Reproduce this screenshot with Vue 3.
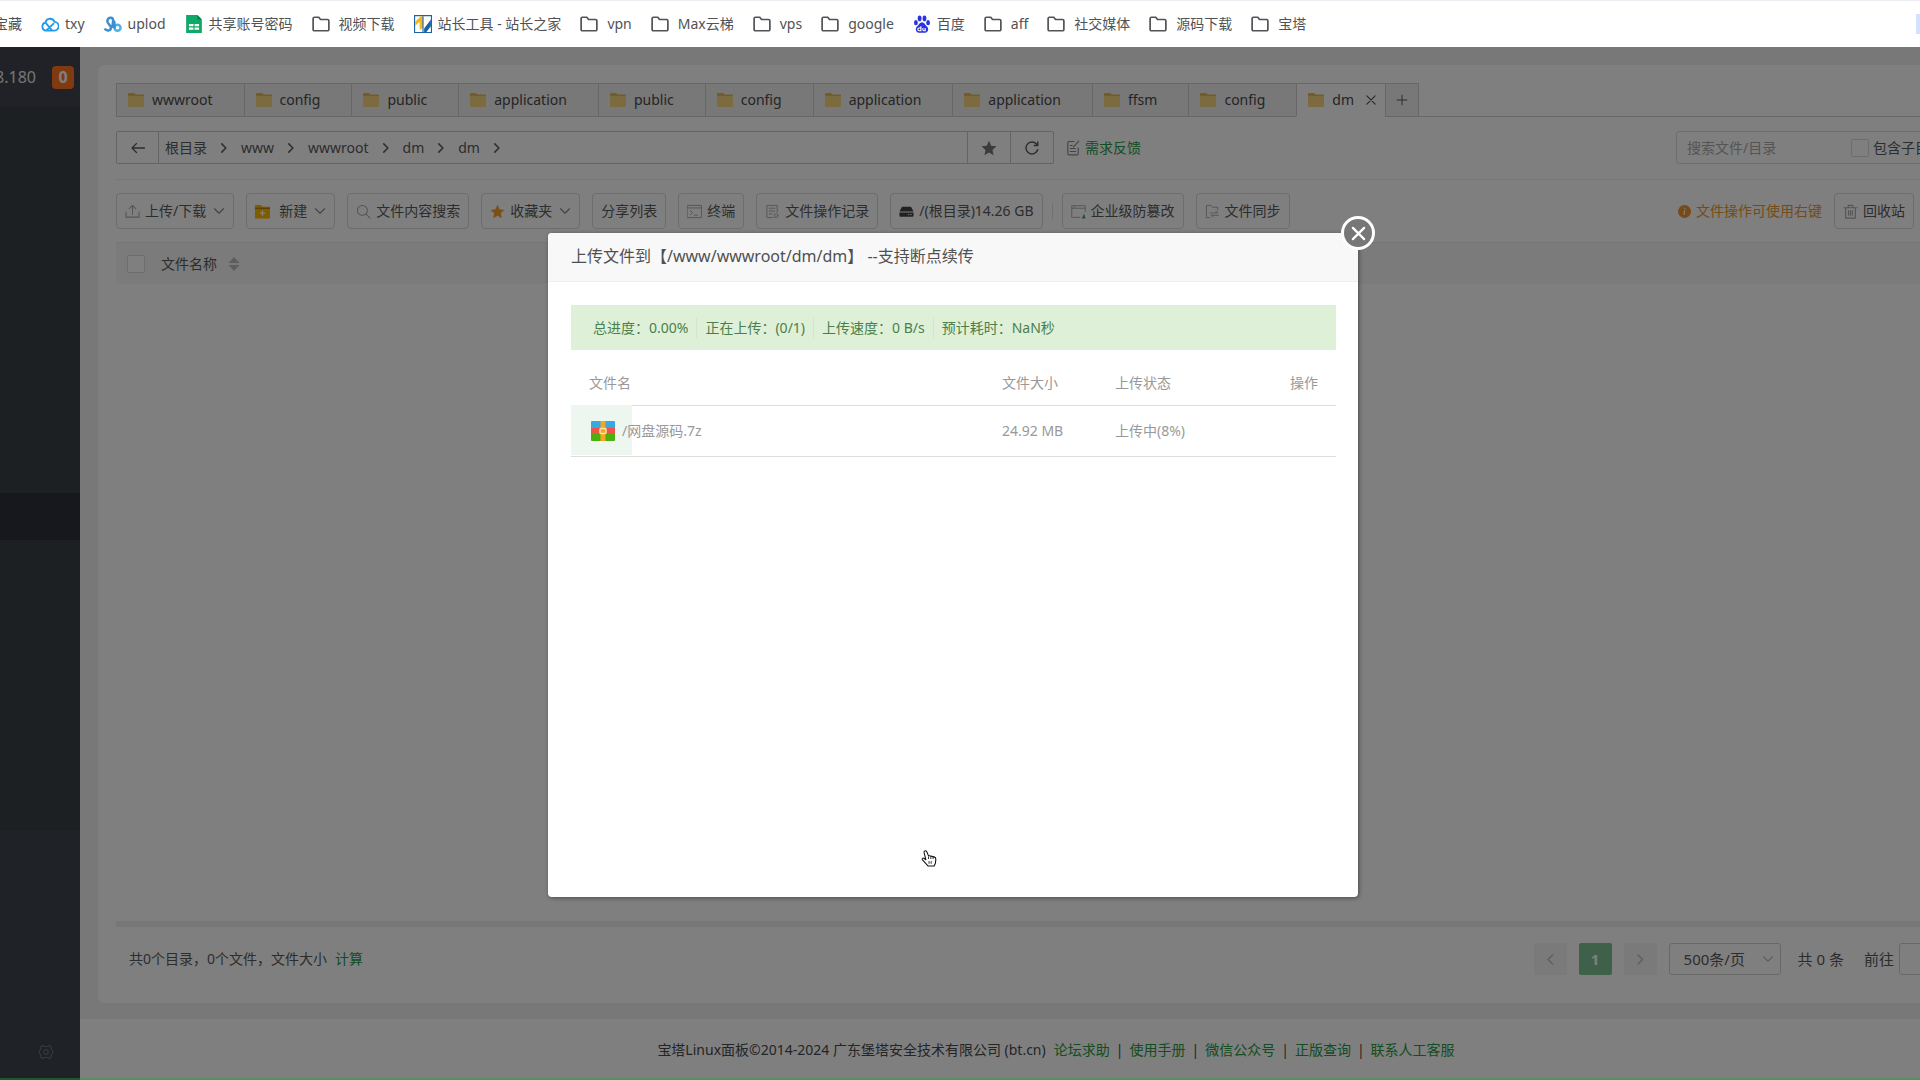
<script setup>
import { ref } from 'vue'

const S = 'fill="none" stroke="currentColor" stroke-linecap="round" stroke-linejoin="round"'
const icons = {
  folderLine: `<path ${S} stroke-width="1.5" d="M1 3.2q0-1.2 1.2-1.2H6l1.6 2h6.2q1.2 0 1.2 1.2v7.6q0 1.2-1.2 1.2H2.2Q1 14 1 12.800z"/>`,
  cloud: `<path fill="none" stroke="#1f9bea" stroke-width="1.600" stroke-linejoin="round" d="M4.600 13.800a3.600 3.600 0 0 1-.6-7.100 4.200 4.200 0 0 1 8.100-.5 3.800 3.800 0 0 1-.4 7.600zM4.800 13.600l6.800-6.400M4.200 7l5.600 6.600"/>`,
  uplod: `<path fill="none" stroke="#3a8fd0" stroke-width="2.200" stroke-linecap="round" d="M1.200 12.800c2 1.700 5 1 5-1.500S2.500 8 3 5s4.500-3.500 5-1-1 4.500 0 6.500"/><circle cx="12" cy="11.300" r="2.700" fill="none" stroke="#49b4e8" stroke-width="2.200"/><path stroke="#3a8fd0" stroke-width="2.200" stroke-linecap="round" d="M9.200 6v5"/>`,
  sheet: `<path fill="#0fa968" d="M1 0h10l4 4v12H1z"/><path fill="#087d4c" d="M11 0l4 4h-4z"/><path fill="#fff" d="M3.500 8h4v2h-4zM8.500 8h4v2h-4zM3.500 11h4v2h-4zM8.500 11h4v2h-4z"/>`,
  zhan: `<path fill="#fff" stroke="#1763a6" stroke-width="1" d="M.5.5h15v15H.5z"/><path fill="#f3b81c" d="M1 6l5-5h1.800v10.500L5 13V6L1 9.500z"/><path fill="#1763a6" d="M7.500 1h1v14h-1zM9 12l6-8v6l-4 5H9z"/>`,
  paw: `<g fill="#2932e1"><ellipse cx="2.600" cy="6.800" rx="1.700" ry="2.300"/><ellipse cx="5.900" cy="3" rx="1.700" ry="2.500"/><ellipse cx="10.200" cy="3" rx="1.700" ry="2.500"/><ellipse cx="13.400" cy="6.800" rx="1.700" ry="2.300"/><path d="M8 6.500c2 0 2.500 2 4.200 3.600 2.500 2.400 1 5.600-1.400 5.600H5.200c-2.400 0-3.900-3.200-1.400-5.600C5.500 8.500 6 6.500 8 6.500z"/></g><path fill="none" stroke="#fff" d="M7 10v4H5.500a1.200 1.200 0 0 1 0-2.500H7M8.800 11.500V13q0 1 1 1h1v-2.500"/>`,
  folder: `<path fill="#e6b84a" d="M0 2q0-1 1-1h5l1.500 1.500H15q1 0 1 1V6H0z"/><path fill="#f7d67c" d="M0 4h16v10q0 1-1 1H1q-1 0-1-1z"/>`,
  back: `<path ${S} stroke-width="1.300" d="M2 8h12.500M6.500 3.500L2 8l4.500 4.500"/>`,
  right: `<path ${S} stroke-width="2" d="M5 2.500L10.500 8 5 13.500"/>`,
  left: `<path ${S} stroke-width="2" d="M10.500 2.500L5 8l5.500 5.500"/>`,
  down: `<path ${S} stroke-width="1.500" d="M2 5l6 6 6-6"/>`,
  star: `<path fill="currentColor" d="M8 .8l2.200 4.900 5.300.6-4 3.600 1.100 5.300L8 12.500l-4.600 2.700 1.100-5.300-4-3.600 5.300-.6z"/>`,
  refresh: `<path ${S} stroke-width="1.400" d="M13.800 9.500A6 6 0 1 1 12.500 4l1.200 1.300M13.800 2v3.500h-3.500"/>`,
  note: `<path ${S} stroke-width="1.100" d="M9 1.500H4q-1.200 0-1.200 1.200v11q0 1.200 1.200 1.200h8q1.200 0 1.200-1.200V8M5.200 8.500h5M5.200 11.500h5.500M8.500 6.800L13.800 1.200M5.200 5.500h2"/>`,
  upload: `<path ${S} stroke-width="1.100" d="M1 8.500V14h14V8.500M8 11V1.800M4.500 5L8 1.500 11.500 5"/>`,
  newFolder: `<path fill="#ffb800" d="M0 1h6l2 2h8v12.500H0z"/><path stroke="#9a6a00" stroke-width="1" d="M0 4.500h16"/><path stroke="#fff" stroke-width="1.400" d="M8 7v5.500M5.200 9.800h5.600"/>`,
  search: `<circle cx="6.800" cy="6.800" r="5.300" ${S} stroke-width="1.100"/><path ${S} stroke-width="1.100" d="M10.800 10.800L15 15"/>`,
  terminal: `<path ${S} d="M.6 1.500h14.800v13H.6zM.6 4.200h14.800M3.500 7l2.500 2.200-2.500 2.200M8 12h3"/>`,
  record: `<path ${S} d="M8.500 14.500H2v-13h11V9M4.500 4.500h6M4.500 7.500h6M4.500 10.500h3"/><circle cx="11.800" cy="12.500" r="2" ${S}/>`,
  disk: `<path fill="#444" d="M3.200 3h9.600L15.500 8H.5zM.5 9h15v3.500q0 1-1 1h-13q-1 0-1-1z"/><path stroke="#fff" d="M9.500 11.300h1.500M12 11.300h1.500"/>`,
  guard: `<path ${S} d="M9.500 14.200H.8V1.800h14.400V8M.8 4.500h14.400M3 3.200h1"/><path fill="#4f9c63" d="M11.500 15.500L14 10.500l1.500 5z"/>`,
  sync: `<path ${S} d="M5 14.500H1.500v-13h4.800L8 3.500h5.500v3M5.500 9.500h8l-2-2M14.500 12H6.500l2 2.200"/>`,
  info: `<circle cx="8" cy="8" r="8" fill="#f0942a"/><path stroke="#fff" stroke-width="1.600" d="M8.600 3.500l-.3 1.600M8.200 6.500l-.8 5.500"/>`,
  trash: `<path ${S} stroke-width="1.200" d="M1 4h14M5.500 4V1.500h5V4M2.800 4v11h10.400V4M6 7v5M8 7v5M10 7v5"/>`,
  close: `<path ${S} stroke-width="1.400" d="M2.500 2.500l11 11M13.500 2.500l-11 11"/>`,
  closeBold: `<path ${S} stroke-width="2.400" d="M2 2l12 12M14 2L2 14"/>`,
  plus: `<path ${S} stroke-width="1.200" d="M8 1.500v13M1.500 8h13"/>`,
  sort: `<path fill="currentColor" d="M8 1l5.500 6h-11zM8 15l5.500-6h-11z"/>`,
  gear: `<path ${S} stroke-width="1.200" d="M4.500 1.500L6.500 2.500h3l2-1 1.500 1 .3 2.500L15.200 8l-1.900 3-.3 2.500-1.500 1-2-1h-3l-2 1-1.500-1L2.700 11 .8 8l1.900-3L3 2.500z"/><circle cx="8" cy="8" r="2.300" ${S} stroke-width="1.200"/>`,
  zip: `<path fill="#35a9e0" d="M1 0h22q1 0 1 1v6H0V1q0-1 1-1z"/><path fill="#f0524a" d="M0 7h24v6H0z"/><path fill="#4caf0c" d="M0 13h24v6q0 1-1 1H1q-1 0-1-1z"/><path fill="#f5a623" d="M9.500 0h5v20h-5z"/><rect x="9" y="7.500" width="6" height="5" rx="1" fill="#f5a623" stroke="#fde3a7" stroke-width="1.500"/>`,
  hand: `<path fill="#fff" stroke="#111" stroke-width="1" stroke-linejoin="round" d="M4.500 1.500c.9-.5 1.700 0 2 .9l1.400 3.400 5.300 1.200c1.300.3 1.800 1 1.700 2.300l-.4 3.700-1.200 2.500H7.500L2.300 9.800c-.8-1.200.6-2.200 1.700-1.300l1.500 1.200L3.800 2.800c-.1-.6.1-1 .7-1.300z"/><path stroke="#111" stroke-width=".8" d="M8 6.500v2.500M10.200 6.500V9M12.300 7v2M8.500 11v2.500M10.500 11v2.500"/>`,
}

const bookmarks = [
  { icon: 'cloud', text: 'txy' },
  { icon: 'uplod', text: 'uplod' },
  { icon: 'sheet', text: '共享账号密码' },
  { icon: 'folderLine', text: '视频下载' },
  { icon: 'zhan', text: '站长工具 - 站长之家' },
  { icon: 'folderLine', text: 'vpn' },
  { icon: 'folderLine', text: 'Max云梯' },
  { icon: 'folderLine', text: 'vps' },
  { icon: 'folderLine', text: 'google' },
  { icon: 'paw', text: '百度' },
  { icon: 'folderLine', text: 'aff' },
  { icon: 'folderLine', text: '社交媒体' },
  { icon: 'folderLine', text: '源码下载' },
  { icon: 'folderLine', text: '宝塔' },
]
const tabs = ['wwwroot', 'config', 'public', 'application', 'public', 'config', 'application', 'application', 'ffsm', 'config']
const crumbs = ['根目录', 'www', 'wwwroot', 'dm', 'dm']
const tools = [
  { icon: 'upload', text: '上传/下载', menu: true },
  { icon: 'newFolder', text: '新建', menu: true, wide: true },
  { icon: 'search', text: '文件内容搜索' },
  { icon: 'star', text: '收藏夹', menu: true, gold: true },
  { text: '分享列表' },
  { icon: 'terminal', text: '终端' },
  { icon: 'record', text: '文件操作记录' },
  { icon: 'disk', text: '/(根目录)14.26 GB' },
]
const extraTools = [
  { icon: 'guard', text: '企业级防篡改' },
  { icon: 'sync', text: '文件同步' },
]
const summary = ['总进度：0.00%', '正在上传：(0/1)', '上传速度：0 B/s', '预计耗时：NaN秒']
const files = [{ name: '/网盘源码.7z', size: '24.92 MB', status: '上传中(8%)', progress: 8 }]
const links = ['论坛求助', '使用手册', '微信公众号', '正版查询', '联系人工客服']

const pageSize = ref('500条/页')
const keyword = ref('')
const withSub = ref(false)
const allChecked = ref(false)
</script>

<template>
  <div class="window">
    <nav class="bookmarks" aria-label="书签栏">
      <a href="#" class="bookmark first">宝藏</a>
      <a v-for="(b, i) in bookmarks" :key="i" href="#" class="bookmark" :class="{ dir: b.icon === 'folderLine' }">
        <svg class="icon" viewBox="0 0 16 16" v-html="icons[b.icon]"></svg>{{ b.text }}
      </a>
      <span class="bookmark-end"></span>
    </nav>

    <div class="shell">
      <aside class="sidebar">
        <div class="server"><span>8.180</span><span class="badge">0</span></div>
        <nav class="menu"><div class="menu-active"></div></nav>
        <div class="menu-rest"></div>
        <div class="settings"><svg class="icon" viewBox="0 0 16 16" v-html="icons.gear"></svg></div>
      </aside>

      <div class="main">
        <section class="card">
          <div class="tabs">
            <button v-for="(t, i) in tabs" :key="i" type="button" class="tab">
              <svg class="icon" viewBox="0 0 16 16" v-html="icons.folder"></svg>{{ t }}
            </button>
            <button type="button" class="tab current">
              <svg class="icon" viewBox="0 0 16 16" v-html="icons.folder"></svg>dm
              <svg class="icon tab-close" viewBox="0 0 16 16" v-html="icons.close"></svg>
            </button>
            <button type="button" class="tab add" aria-label="新标签">
              <svg class="icon" viewBox="0 0 16 16" v-html="icons.plus"></svg>
            </button>
            <span class="tabs-line"></span>
          </div>

          <div class="path-row">
            <div class="path">
              <button type="button" class="path-btn back" aria-label="返回"><svg class="icon" viewBox="0 0 16 16" v-html="icons.back"></svg></button>
              <div class="crumbs">
                <template v-for="(c, i) in crumbs" :key="i">
                  <a href="#">{{ c }}</a>
                  <svg class="icon chevron" viewBox="0 0 16 16" v-html="icons.right"></svg>
                </template>
              </div>
              <button type="button" class="path-btn star" aria-label="收藏"><svg class="icon" viewBox="0 0 16 16" v-html="icons.star"></svg></button>
              <button type="button" class="path-btn" aria-label="刷新"><svg class="icon" viewBox="0 0 16 16" v-html="icons.refresh"></svg></button>
            </div>
            <a href="#" class="feedback"><svg class="icon" viewBox="0 0 16 16" v-html="icons.note"></svg>需求反馈</a>
            <div class="search">
              <input v-model="keyword" type="text" placeholder="搜索文件/目录" aria-label="搜索文件/目录" />
              <input id="sub" v-model="withSub" type="checkbox" class="check" />
              <label for="sub">包含子目录</label>
            </div>
          </div>

          <div class="toolbar">
            <button v-for="t in tools" :key="t.text" type="button" class="tool">
              <svg v-if="t.icon" class="icon" :class="{ gold: t.gold, wide: t.wide }" viewBox="0 0 16 16" v-html="icons[t.icon]"></svg>
              {{ t.text }}
              <svg v-if="t.menu" class="icon caret" viewBox="0 0 16 16" v-html="icons.down"></svg>
            </button>
            <span class="tool-sep"></span>
            <button v-for="t in extraTools" :key="t.text" type="button" class="tool">
              <svg class="icon" viewBox="0 0 16 16" v-html="icons[t.icon]"></svg>
              {{ t.text }}
            </button>
            <span class="hint"><svg class="icon" viewBox="0 0 16 16" v-html="icons.info"></svg>文件操作可使用右键</span>
            <button type="button" class="tool recycle"><svg class="icon" viewBox="0 0 16 16" v-html="icons.trash"></svg>回收站</button>
          </div>

          <div class="sheet">
            <div class="sheet-head">
              <input id="all" v-model="allChecked" type="checkbox" class="check" />
              <label for="all">文件名称</label>
              <svg class="icon" viewBox="0 0 16 16" v-html="icons.sort"></svg>
            </div>
          </div>

          <div class="card-foot">
            <p>共0个目录，0个文件，文件大小<a href="#">计算</a></p>
            <div class="pager">
              <button type="button" class="page" aria-label="上一页"><svg class="icon" viewBox="0 0 16 16" v-html="icons.left"></svg></button>
              <button type="button" class="page on">1</button>
              <button type="button" class="page" aria-label="下一页"><svg class="icon" viewBox="0 0 16 16" v-html="icons.right"></svg></button>
              <span class="size">
                <select v-model="pageSize" aria-label="每页条数"><option>500条/页</option></select>
                <svg class="icon" viewBox="0 0 16 16" v-html="icons.down"></svg>
              </span>
              <span class="total">共 0 条</span>
              <label for="jump">前往</label>
              <input id="jump" type="text" class="jump" />
            </div>
          </div>
        </section>

        <footer class="footer">
          <span class="copyright">宝塔Linux面板©2014-2024 广东堡塔安全技术有限公司 (bt.cn)</span>
          <template v-for="(l, i) in links" :key="l">
            <span v-if="i" class="bar">|</span><a href="#">{{ l }}</a>
          </template>
        </footer>
      </div>

      <div class="mask">
        <div class="modal" role="dialog" aria-labelledby="upload-title">
          <h2 id="upload-title">上传文件到【/www/wwwroot/dm/dm】 --支持断点续传</h2>
          <button type="button" class="modal-close" aria-label="关闭"><svg class="icon" viewBox="0 0 16 16" v-html="icons.closeBold"></svg></button>
          <div class="modal-body">
            <div class="summary"><span v-for="s in summary" :key="s">{{ s }}</span></div>
            <table class="files">
              <thead>
                <tr><th class="c-name">文件名</th><th class="c-size">文件大小</th><th>上传状态</th><th class="c-act">操作</th></tr>
              </thead>
              <tbody>
                <tr v-for="f in files" :key="f.name">
                  <td>
                    <div class="progress" :style="{ width: f.progress + '%' }"></div>
                    <div class="file"><svg class="icon" viewBox="0 0 24 20" v-html="icons.zip"></svg>{{ f.name }}</div>
                  </td>
                  <td>{{ f.size }}</td>
                  <td>{{ f.status }}</td>
                  <td></td>
                </tr>
              </tbody>
            </table>
          </div>
          <svg class="cursor" viewBox="0 0 16 18" v-html="icons.hand"></svg>
        </div>
      </div>
    </div>
  </div>
</template>

<style>
body {
  margin: 0;
  overflow: hidden;
}
</style>

<style scoped>
.window {
  display: flex;
  flex-direction: column;
  min-height: 100vh;
  font: 14px/20px "Noto Sans", "Noto Sans CJK SC", sans-serif;
  color: #5a5a5a;
  overflow: hidden;
}
.window * { box-sizing: border-box; }
a { color: inherit; text-decoration: none; }
button, input, select { font: inherit; color: inherit; margin: 0; }
button { padding: 0; background: none; border: 0; white-space: nowrap; }
.icon { width: 16px; height: 16px; flex: none; display: block; }

.bookmarks {
  display: flex;
  align-items: center;
  gap: 19px;
  height: 47px;
  border-top: 1px solid #ececf2;
  background: #fff;
  color: #505255;
  white-space: nowrap;
}
.bookmark { display: flex; align-items: center; gap: 6px; }
.bookmark.dir { gap: 9px; }
.bookmark .icon { width: 18px; height: 18px; }
.bookmark.first { width: 22px; justify-content: flex-end; }
.bookmark-end { width: 4px; height: 20px; margin-left: auto; background: #d3e3fd; }

.shell { position: relative; flex: 1; display: flex; }
.sidebar { flex: none; width: 80px; display: flex; flex-direction: column; background: #384046; overflow: hidden; }
.server {
  display: flex;
  align-items: center;
  justify-content: flex-end;
  gap: 16px;
  height: 60px;
  padding-right: 6px;
  background: #40444e;
  color: #e8e8e8;
  font-size: 16px;
}
.badge {
  flex: none;
  width: 22px;
  border-radius: 4px;
  background: #ff7420;
  color: #fff;
  font-weight: 700;
  line-height: 23px;
  text-align: center;
}
.menu { padding-top: 386px; height: 724px; }
.menu-active { height: 47px; background: #2e303a; }
.menu-rest { flex: 1; background: #3e444c; }
.settings {
  display: flex;
  align-items: center;
  justify-content: center;
  height: 58px;
  padding-left: 12px;
  border-top: 1px solid #42484f;
  background: #3e444c;
  color: #6c7076;
}

.main { flex: 1; min-width: 0; display: flex; flex-direction: column; gap: 16px; padding-top: 18px; background: #f1f1f1; overflow: hidden; }
.card {
  flex: 1;
  display: flex;
  flex-direction: column;
  margin: 0 -46px 0 18px;
  padding: 18px 18px 0;
  border-radius: 6px;
  background: #fff;
}
.tabs { display: flex; height: 34px; color: #4a4a4a; }
.tab {
  display: flex;
  align-items: center;
  gap: 7px;
  padding: 0 31px 0 10px;
  border: 1px solid #cfcfcf;
  border-right: 0;
  background: #f0f0f0;
}
.tab .icon { width: 18px; }
.tab.current { padding-right: 8px; border-bottom-color: #fff; background: #fff; }
.tab .tab-close { width: 12px; height: 12px; margin-left: 4px; }
.tab.add { width: 34px; padding: 0; justify-content: center; border-right: 1px solid #cfcfcf; }
.tab.add .icon { width: 12px; height: 12px; }
.tabs-line { flex: 1; border-bottom: 1px solid #cfcfcf; }

.path-row { display: flex; align-items: center; margin-top: 14px; padding-bottom: 15px; border-bottom: 1px solid #ececec; }
.path { display: flex; width: 938px; height: 33px; border: 1px solid #c8c8c8; border-radius: 2px; }
.path-btn { width: 42px; display: flex; align-items: center; justify-content: center; }
.path-btn.back { border-right: 1px solid #c8c8c8; }
.path-btn.star { width: 44px; border: solid #c8c8c8; border-width: 0 1px; color: #777; }
.crumbs { flex: 1; display: flex; align-items: center; gap: 11px; padding-left: 6px; }
.chevron { width: 12px; height: 12px; }
.feedback { display: flex; align-items: center; gap: 4px; margin-left: 11px; color: #269a42; }
.feedback .icon { color: #888; }
.search {
  display: flex;
  align-items: center;
  width: 272px;
  height: 33px;
  margin-left: auto;
  padding-left: 10px;
  border: 1px solid #dcdcdc;
  border-radius: 3px;
  white-space: nowrap;
  overflow: hidden;
}
.search input[type="text"] { width: 164px; border: 0; padding: 0; background: none; }
.search label { margin-left: 4px; }
.search input::placeholder { color: #aaa; opacity: 1; }
.check { flex: none; appearance: none; width: 18px; height: 18px; border: 1px solid #dcdcdc; border-radius: 2px; background: #fff; }

.toolbar { display: flex; align-items: center; gap: 12px; margin-top: 13px; }
.tool {
  display: flex;
  align-items: center;
  gap: 5px;
  height: 36px;
  padding: 0 8px;
  border: 1px solid #d8d8d8;
  border-radius: 4px;
}
.tool .icon { width: 15px; height: 15px; color: #aaa; }
.tool .wide { margin-right: 4px; }
.tool .gold { color: #f5a030; }
.tool .caret { width: 12px; height: 12px; margin-left: 2px; color: #888; }
.tool-sep { width: 1px; height: 16px; margin: 0 -3px; background: #e0e0e0; }
.hint { display: flex; align-items: center; gap: 5px; margin-left: auto; color: #f0942a; }
.hint .icon { width: 13px; height: 13px; }
.recycle { margin-right: 34px; }

.sheet { flex: 1; margin-top: 13px; border-bottom: 6px solid #efefef; }
.sheet-head { display: flex; align-items: center; height: 42px; padding-left: 11px; border-top: 1px solid #ececec; background: #f6f6f6; }
.sheet-head label { margin: 0 9px 0 16px; }
.sheet-head .icon { color: #bbb; }

.card-foot { display: flex; align-items: center; justify-content: space-between; height: 76px; padding: 0 0 12px 13px; }
.card-foot p { margin: 0; }
.card-foot p a { margin-left: 8px; color: #269a42; }
.pager { display: flex; align-items: center; font-size: 15px; }
.page { display: flex; align-items: center; justify-content: center; width: 33px; height: 32px; margin-right: 12px; border-radius: 2px; background: #f4f4f5; color: #c0c0c0; }
.page .icon { width: 13px; height: 13px; }
.page.on { background: #80c292; color: #fff; font-weight: 700; }
.size { position: relative; }
.size select { appearance: none; display: block; width: 112px; height: 32px; padding: 0 0 0 14px; border: 1px solid #d0d0d0; border-radius: 3px; background: #fff; }
.size .icon { position: absolute; right: 7px; top: 10px; width: 12px; height: 12px; color: #bbb; }
.total { margin: 0 20px 0 17px; }
.jump { width: 49px; height: 32px; margin-left: 5px; border: 1px solid #d0d0d0; border-radius: 3px; }

.footer { display: flex; align-items: center; justify-content: center; height: 61px; padding: 0 0 0 112px; background: #fff; color: #4a4a4a; white-space: nowrap; }
.footer a { color: #269a42; }
.copyright { margin-right: 8px; }
.bar { margin: 0 6px; }

.mask {
  position: absolute;
  inset: 0;
  display: flex;
  align-items: flex-start;
  justify-content: center;
  padding: 186px 14px 0 0;
  border-bottom: 2px solid rgba(32, 165, 58, 0.4);
  background: rgba(0, 0, 0, 0.5);
}
.modal { position: relative; width: 810px; min-height: 664px; border-radius: 4px; background: #fff; box-shadow: 1px 1px 4px rgba(0, 0, 0, 0.4); }
.modal h2 { margin: 0; padding: 0 23px 2px; border-bottom: 1px solid #eee; border-radius: 4px 4px 0 0; background: #f8f8f8; color: #505050; font-size: 16px; font-weight: 400; line-height: 46px; }
.modal-close {
  position: absolute;
  top: -17px;
  right: -17px;
  display: flex;
  align-items: center;
  justify-content: center;
  width: 34px;
  height: 34px;
  border: 3px solid #fff;
  border-radius: 50%;
  background: #777;
  color: #fff;
}
.modal-close .icon { width: 15px; height: 15px; }
.modal-body { padding: 23px 22px 23px 23px; }
.summary { display: flex; align-items: center; height: 45px; padding-left: 22px; background: #dff0d8; color: #4a7f4b; }
.summary span + span { margin-left: 8px; padding-left: 8px; border-left: 1px solid #d0e6d0; }
.files { width: 100%; margin-top: 11px; border-collapse: collapse; color: #999; }
.files th { height: 44px; padding: 0 18px; font-weight: 400; text-align: left; }
.files td { height: 51px; padding: 0 18px; }
.files tr { position: relative; border-bottom: 1px solid #ddd; }
.files .c-name { width: 413px; }
.files .c-size { width: 113px; }
.files .c-act { text-align: right; }
.progress { position: absolute; inset: 0 auto 0 0; background: #eef6f0; }
.file { position: relative; display: flex; align-items: center; gap: 7px; padding-left: 2px; }
.file .icon { width: 24px; height: 20px; }
.cursor { position: absolute; left: 372px; top: 616px; width: 17px; height: 20px; }
</style>
